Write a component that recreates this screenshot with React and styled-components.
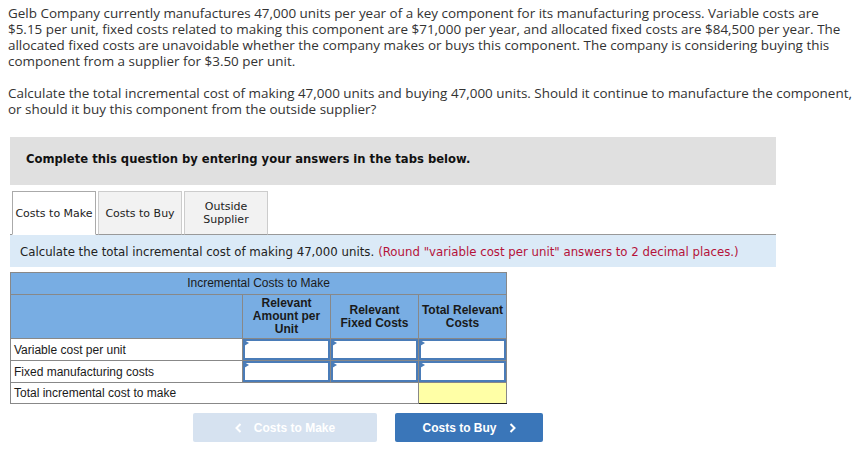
import React from 'react'
import styled, { createGlobalStyle } from 'styled-components'

const GlobalStyle = createGlobalStyle`
  body {
    margin: 0;
    background: #fff;
  }
`

const Page = styled.div`
  width: 864px;
  padding: 5px 0 0 8px;
  box-sizing: border-box;
`

const Para = styled.p`
  margin: 0 0 16px 0;
  width: 850px;
  white-space: nowrap;
  font-family: "Open Sans", Lato, sans-serif;
  font-size: 13.45px;
  line-height: 16px;
  color: #333;
`

const Block = styled.div`
  margin-left: 2px;
  width: 766px;
`

const Notice = styled.div`
  margin-top: 20px;
  height: 48px;
  background: #e0e0e0;
  display: flex;
  align-items: center;
  padding: 0 0 4px 16px;
  box-sizing: border-box;
  font-family: "DejaVu Sans", Verdana, sans-serif;
  font-weight: bold;
  font-size: 11.6px;
  color: #111;
`

const TabStrip = styled.div`
  margin-top: 6px;
  display: flex;
  gap: 2px;
  padding-left: 2px;
  border-bottom: 1px solid #999;
`

const Tab = styled.div`
  width: 82px;
  height: 42px;
  margin-bottom: -1px;
  display: flex;
  align-items: center;
  justify-content: center;
  text-align: center;
  font-family: "DejaVu Sans", Verdana, sans-serif;
  font-size: 11px;
  line-height: 13px;
  color: #222;
  background: ${(p) => (p.active ? '#fff' : '#f2f2f2')};
  border: 1px solid ${(p) => (p.active ? '#aaa' : '#ccc')};
  border-bottom: ${(p) => (p.active ? '1px solid #fff' : '1px solid #999')};
`

const Instruction = styled.div`
  height: 32px;
  background: #dbeaf7;
  display: flex;
  align-items: center;
  padding: 1px 0 0 10px;
  box-sizing: border-box;
  font-family: "DejaVu Sans", Verdana, sans-serif;
  font-size: 11.75px;
  color: #222;
`

const Red = styled.span`
  color: #b5123a;
  margin-left: 4px;
`

const Grid = styled.table`
  margin-top: 5px;
  border-collapse: collapse;
  width: 497px;
  font-family: "Liberation Sans", Arial, sans-serif;
  font-size: 12px;
  color: #1a1a1a;
`

const HeadCell = styled.th`
  background: #78ade3;
  border: 1px solid #888;
  font-weight: ${(p) => (p.plain ? 'normal' : 'bold')};
  text-align: center;
  line-height: 13px;
  height: ${(p) => p.h}px;
  padding: 0 2px;
  vertical-align: middle;
`

const LabelCell = styled.td`
  border: 1px solid #888;
  height: ${(p) => p.h || 21}px;
  padding: 0 3px;
  text-align: left;
`

const InputCell = styled.td`
  border: 1px solid #888;
  width: 87px;
  height: ${(p) => p.h || 21}px;
  padding: 0;
  background: ${(p) => (p.yellow ? '#ffffa6' : '#fff')};
  ${(p) => (p.yellow ? 'border-bottom: 1px solid #222;' : '')}
`

const InputBox = styled.div`
  position: relative;
  height: 21px;
  box-sizing: border-box;
  border: 2px solid #4a7cb8;
  background: #fff;
  &::before {
    content: '';
    position: absolute;
    left: -1px;
    top: -1px;
    border-top: 3px solid transparent;
    border-bottom: 3px solid transparent;
    border-left: 5px solid #4a7cb8;
  }
`

const Nav = styled.div`
  margin-top: 9px;
  padding-left: 183px;
  display: flex;
  gap: 18px;
`

const NavButton = styled.div`
  height: 29px;
  width: ${(p) => p.w}px;
  border-radius: 2px;
  display: flex;
  align-items: center;
  justify-content: center;
  gap: 12px;
  font-family: "Liberation Sans", Arial, sans-serif;
  font-weight: bold;
  font-size: 12px;
  color: #fff;
  background: ${(p) => (p.disabled ? '#d6e2f0' : '#3a76b9')};
`

const Chevron = ({ dir }) => (
  <svg width="7" height="10" viewBox="0 0 7 10">
    <path
      d={dir === 'left' ? 'M5.5 1 L1.5 5 L5.5 9' : 'M1.5 1 L5.5 5 L1.5 9'}
      fill="none"
      stroke="#fff"
      strokeWidth="2"
    />
  </svg>
)

const rows = ['Variable cost per unit', 'Fixed manufacturing costs']

const App = () => (
  <Page>
    <GlobalStyle />
    <Para>
      Gelb Company currently manufactures 47,000 units per year of a key component for its
      manufacturing process. Variable costs are
      <br />
      $5.15 per unit, fixed costs related to making this component are $71,000 per year, and
      allocated fixed costs are $84,500 per year. The
      <br />
      allocated fixed costs are unavoidable whether the company makes or buys this component.
      The company is considering buying this
      <br />
      component from a supplier for $3.50 per unit.
    </Para>
    <Para>
      Calculate the total incremental cost of making 47,000 units and buying 47,000 units.
      Should it continue to manufacture the component,
      <br />
      or should it buy this component from the outside supplier?
    </Para>
    <Block>
      <Notice>Complete this question by entering your answers in the tabs below.</Notice>
      <TabStrip>
        <Tab active>Costs to Make</Tab>
        <Tab>Costs to Buy</Tab>
        <Tab>
          Outside
          <br />
          Supplier
        </Tab>
      </TabStrip>
      <Instruction>
        Calculate the total incremental cost of making 47,000 units.
        <Red>(Round "variable cost per unit" answers to 2 decimal places.)</Red>
      </Instruction>
      <Grid>
        <thead>
          <tr>
            <HeadCell colSpan={4} plain h={21}>
              Incremental Costs to Make
            </HeadCell>
          </tr>
          <tr>
            <HeadCell h={43} />
            <HeadCell h={43}>
              Relevant
              <br />
              Amount per
              <br />
              Unit
            </HeadCell>
            <HeadCell h={43}>
              Relevant
              <br />
              Fixed Costs
            </HeadCell>
            <HeadCell h={43}>
              Total Relevant
              <br />
              Costs
            </HeadCell>
          </tr>
        </thead>
        <tbody>
          {rows.map((r) => (
            <tr key={r}>
              <LabelCell>{r}</LabelCell>
              <InputCell>
                <InputBox />
              </InputCell>
              <InputCell>
                <InputBox />
              </InputCell>
              <InputCell>
                <InputBox />
              </InputCell>
            </tr>
          ))}
          <tr>
            <LabelCell colSpan={3} h={20}>
              Total incremental cost to make
            </LabelCell>
            <InputCell yellow h={20} />
          </tr>
        </tbody>
      </Grid>
      <Nav>
        <NavButton disabled w={184}>
          <Chevron dir="left" />
          Costs to Make
        </NavButton>
        <NavButton w={148}>
          Costs to Buy
          <Chevron dir="right" />
        </NavButton>
      </Nav>
    </Block>
  </Page>
)

export default App
